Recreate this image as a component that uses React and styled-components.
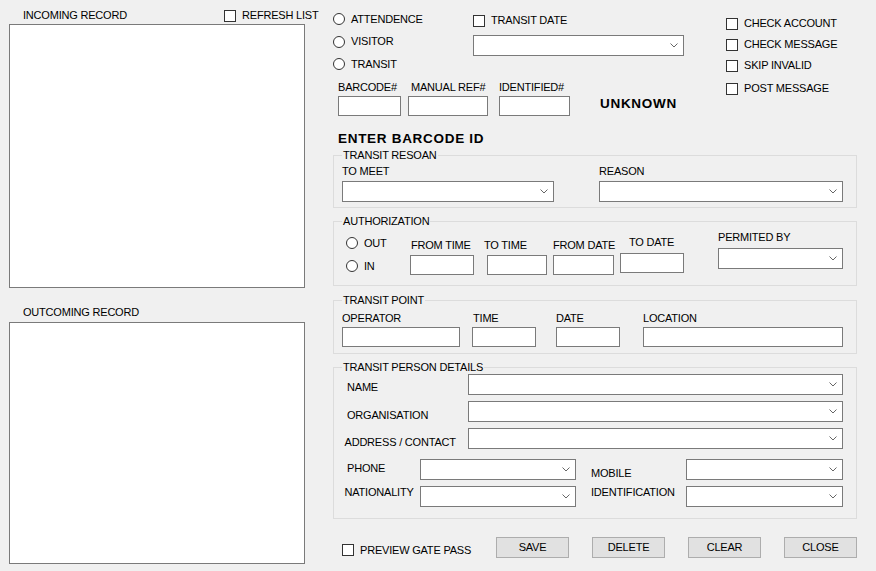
import React from "react";
import styled, { createGlobalStyle } from "styled-components";

const GlobalStyle = createGlobalStyle`
  html, body { margin: 0; padding: 0; background: #f0f0f0; }
  * { box-sizing: border-box; }
`;

const Window = styled.div`
  width: 876px;
  height: 571px;
  overflow: hidden;
  display: flex;
  background: #f0f0f0;
  color: #000;
  font-family: "Liberation Sans", Arial, sans-serif;
  font-size: 11px;
  letter-spacing: -0.2px;
`;

/* ---------- left pane ---------- */
const LeftPane = styled.div`
  flex: 0 0 333px;
  padding-left: 9px;
  display: flex;
  flex-direction: column;
`;

const ListHeader = styled.div`
  display: flex;
  align-items: center;
  padding-left: 14px;
  margin-top: ${(p) => p.$mt}px;
`;

const Label = styled.div`
  line-height: 13px;
  white-space: nowrap;
  flex: 0 0 auto;
  width: ${(p) => (p.$w ? `${p.$w}px` : "auto")};
  margin-top: ${(p) => p.$mt || 0}px;
  margin-left: ${(p) => p.$ml || 0}px;
  padding-left: ${(p) => p.$pl || 0}px;
`;

const ListBox = styled.div`
  width: 296px;
  height: ${(p) => p.$h}px;
  margin-top: ${(p) => p.$mt}px;
  background: #fff;
  border: 1px solid #7a7a7a;
`;

/* ---------- common controls ---------- */
const CheckItem = styled.div`
  display: flex;
  align-items: center;
  gap: 6px;
  height: 13px;
  line-height: 13px;
  white-space: nowrap;
  flex: 0 0 auto;
  width: ${(p) => (p.$w ? `${p.$w}px` : "auto")};
  margin-top: ${(p) => p.$mt || 0}px;
  margin-left: ${(p) => p.$ml || 0}px;
`;

const Box = styled.span`
  width: 12px;
  height: 12px;
  flex: 0 0 12px;
  border: 1px solid #333;
  background: #fff;
`;

const RadioItem = styled.div`
  display: flex;
  align-items: center;
  gap: 6px;
  height: 13px;
  line-height: 13px;
  white-space: nowrap;
`;

const Circle = styled.span`
  width: 12px;
  height: 12px;
  flex: 0 0 12px;
  border: 1px solid #333;
  border-radius: 50%;
  background: #fff;
`;

const TextBox = styled.div`
  width: ${(p) => p.$w}px;
  height: 20px;
  margin-left: ${(p) => p.$dx || 0}px;
  background: #fff;
  border: 1px solid #7a7a7a;
  flex: 0 0 auto;
`;

const ComboFrame = styled.div`
  width: ${(p) => p.$w}px;
  height: 21px;
  margin-left: ${(p) => p.$dx || 0}px;
  margin-top: ${(p) => p.$mt || 0}px;
  background: #fff;
  border: 1px solid #7a7a7a;
  flex: 0 0 auto;
  display: flex;
  align-items: center;
  justify-content: flex-end;
  padding-right: 5px;
`;

const Combo = ({ w, dx, mt }) => (
  <ComboFrame $w={w} $dx={dx} $mt={mt}>
    <svg width="8" height="5" viewBox="0 0 8 5">
      <polyline points="0.5,0.5 4,4 7.5,0.5" fill="none" stroke="#666" strokeWidth="1" />
    </svg>
  </ComboFrame>
);

const Field = styled.div`
  display: flex;
  flex-direction: column;
  flex: 0 0 auto;
  width: ${(p) => p.$w}px;
  margin-left: ${(p) => p.$ml || 0}px;
  margin-top: ${(p) => p.$mt || 0}px;
`;

const FieldLabel = styled.div`
  line-height: 13px;
  white-space: nowrap;
  padding-left: ${(p) => p.$dx || 0}px;
  margin-bottom: ${(p) => p.$gap}px;
`;

const BoldText = styled.div`
  font-size: 13.5px;
  font-weight: bold;
  letter-spacing: 0.7px;
  line-height: 16px;
  white-space: nowrap;
  margin-top: ${(p) => p.$mt || 0}px;
  margin-left: ${(p) => p.$ml || 0}px;
`;

/* ---------- right pane ---------- */
const RightPane = styled.div`
  flex: 1 1 auto;
  display: flex;
  flex-direction: column;
`;

const TopSection = styled.div`
  display: flex;
`;

const TopLeft = styled.div`
  flex: 0 0 393px;
  display: flex;
  flex-direction: column;
`;

const Row = styled.div`
  display: flex;
  align-items: flex-start;
  margin-top: ${(p) => p.$mt || 0}px;
`;

const PersonRow = styled.div`
  display: flex;
  align-items: flex-start;
  height: 21px;
  margin-top: ${(p) => p.$mt || 0}px;
`;

const RadioColumn = styled.div`
  flex: 0 0 ${(p) => p.$w}px;
  display: flex;
  flex-direction: column;
  gap: ${(p) => p.$gap}px;
  padding-top: ${(p) => p.$pt}px;
  margin-left: ${(p) => p.$ml || 0}px;
`;

const TransitDateColumn = styled.div`
  display: flex;
  flex-direction: column;
  padding-top: 14px;
`;

const CheckColumn = styled.div`
  display: flex;
  flex-direction: column;
  padding-top: 17px;
`;

const Group = styled.fieldset`
  width: 524px;
  min-width: 0;
  margin: ${(p) => p.$mt}px 0 0 0;
  padding: 0;
  border: 1px solid #dcdcdc;
`;

const Legend = styled.legend`
  margin-left: 8px;
  padding: 0 1px;
  line-height: 13px;
  font-size: 11px;
  white-space: nowrap;
`;

const GroupBody = styled.div`
  display: flex;
  flex-direction: ${(p) => p.$dir || "row"};
  align-items: flex-start;
  padding: ${(p) => p.$pad};
`;

const Footer = styled.div`
  display: flex;
  align-items: flex-start;
  margin-top: 18px;
`;

const ButtonBar = styled.div`
  display: flex;
  gap: 23px;
`;

const Button = styled.button`
  width: 73px;
  height: 21px;
  padding: 0;
  background: #e1e1e1;
  border: 1px solid #adadad;
  border-radius: 0;
  font-family: "Liberation Sans", Arial, sans-serif;
  font-size: 11px;
  letter-spacing: -0.2px;
  color: #000;
  line-height: 19px;
`;

const Check = ({ children, ...rest }) => (
  <CheckItem {...rest}>
    <Box />
    <span>{children}</span>
  </CheckItem>
);

const Radio = ({ children }) => (
  <RadioItem>
    <Circle />
    <span>{children}</span>
  </RadioItem>
);

const authFields = [
  { label: "FROM TIME", ml: 14, mt: 11, gap: 3, ldx: 1, bdx: 0, bw: 64 },
  { label: "TO TIME", ml: 9, mt: 11, gap: 3, ldx: 1, bdx: 4, bw: 60 },
  { label: "FROM DATE", ml: 6, mt: 11, gap: 3, ldx: 0, bdx: 0, bw: 61 },
  { label: "TO DATE", ml: 6, mt: 8, gap: 4, ldx: 9, bdx: 0, bw: 64 },
];

const pointFields = [
  { label: "OPERATOR", ml: 8, ldx: 0, bdx: 0, bw: 118 },
  { label: "TIME", ml: 12, ldx: 1, bdx: 0, bw: 64 },
  { label: "DATE", ml: 20, ldx: 0, bdx: 0, bw: 64 },
  { label: "LOCATION", ml: 23, ldx: 0, bdx: 0, bw: 200 },
];

export default function App() {
  return (
    <>
      <GlobalStyle />
      <Window>
        <LeftPane>
          <ListHeader $mt={9}>
            <Label $w={201}>INCOMING RECORD</Label>
            <Check>REFRESH LIST</Check>
          </ListHeader>
          <ListBox $mt={2} $h={264} />
          <Label $mt={18} $pl={14}>OUTCOMING RECORD</Label>
          <ListBox $mt={3} $h={242} />
        </LeftPane>

        <RightPane>
          <TopSection>
            <TopLeft>
              <Row>
                <RadioColumn $w={140} $gap={9.5} $pt={12.5}>
                  <Radio>ATTENDENCE</Radio>
                  <Radio>VISITOR</Radio>
                  <Radio>TRANSIT</Radio>
                </RadioColumn>
                <TransitDateColumn>
                  <Check>TRANSIT DATE</Check>
                  <Combo w={211} mt={8} />
                </TransitDateColumn>
              </Row>
              <Row $mt={10}>
                <Field $w={63} $ml={5}>
                  <FieldLabel $gap={2.5}>BARCODE#</FieldLabel>
                  <TextBox $w={63} />
                </Field>
                <Field $w={80} $ml={7}>
                  <FieldLabel $gap={2.5} $dx={3}>MANUAL REF#</FieldLabel>
                  <TextBox $w={80} />
                </Field>
                <Field $w={71} $ml={11}>
                  <FieldLabel $gap={2.5}>IDENTIFIED#</FieldLabel>
                  <TextBox $w={71} />
                </Field>
                <BoldText $ml={30} $mt={15.5}>UNKNOWN</BoldText>
              </Row>
              <BoldText $ml={5} $mt={14.5}>ENTER BARCODE ID</BoldText>
            </TopLeft>
            <CheckColumn>
              <Check>CHECK ACCOUNT</Check>
              <Check $mt={8}>CHECK MESSAGE</Check>
              <Check $mt={8}>SKIP INVALID</Check>
              <Check $mt={10}>POST MESSAGE</Check>
            </CheckColumn>
          </TopSection>

          <Group $mt={2.5}>
            <Legend>TRANSIT RESOAN</Legend>
            <GroupBody $pad="2.5px 0 5px 0">
              <Field $w={212} $ml={8}>
                <FieldLabel $gap={3}>TO MEET</FieldLabel>
                <Combo w={212} />
              </Field>
              <Field $w={244} $ml={45}>
                <FieldLabel $gap={3}>REASON</FieldLabel>
                <Combo w={244} />
              </Field>
            </GroupBody>
          </Group>

          <Group $mt={7.5}>
            <Legend>AUTHORIZATION</Legend>
            <GroupBody $pad="0 0 10px 0">
              <RadioColumn $w={50} $gap={10} $pt={8.5} $ml={12}>
                <Radio>OUT</Radio>
                <Radio>IN</Radio>
              </RadioColumn>
              {authFields.map((f) => (
                <Field key={f.label} $w={f.bdx + f.bw} $ml={f.ml} $mt={f.mt}>
                  <FieldLabel $gap={f.gap} $dx={f.ldx}>{f.label}</FieldLabel>
                  <TextBox $w={f.bw} $dx={f.bdx} />
                </Field>
              ))}
              <Field $w={125} $ml={34} $mt={3}>
                <FieldLabel $gap={4}>PERMITED BY</FieldLabel>
                <Combo w={125} />
              </Field>
            </GroupBody>
          </Group>

          <Group $mt={7.5}>
            <Legend>TRANSIT POINT</Legend>
            <GroupBody $pad="5px 0 6px 0">
              {pointFields.map((f) => (
                <Field key={f.label} $w={f.bdx + f.bw} $ml={f.ml}>
                  <FieldLabel $gap={2} $dx={f.ldx}>{f.label}</FieldLabel>
                  <TextBox $w={f.bw} $dx={f.bdx} />
                </Field>
              ))}
            </GroupBody>
          </Group>

          <Group $mt={7.5}>
            <Legend>TRANSIT PERSON DETAILS</Legend>
            <GroupBody $dir="column" $pad="0 0 10.5px 0">
              <PersonRow>
                <Label $w={134} $pl={13} $mt={7}>NAME</Label>
                <Combo w={375} />
              </PersonRow>
              <PersonRow $mt={6}>
                <Label $w={134} $pl={13} $mt={7.5}>ORGANISATION</Label>
                <Combo w={375} />
              </PersonRow>
              <PersonRow $mt={6}>
                <Label $w={134} $pl={10.5} $mt={7.5}>ADDRESS / CONTACT</Label>
                <Combo w={375} />
              </PersonRow>
              <PersonRow $mt={10}>
                <Label $w={86} $pl={13} $mt={2.5}>PHONE</Label>
                <Combo w={156} />
                <Label $w={110} $pl={15} $mt={7.5}>MOBILE</Label>
                <Combo w={157} />
              </PersonRow>
              <PersonRow $mt={6}>
                <Label $w={86} $pl={10.5} $mt={-0.5}>NATIONALITY</Label>
                <Combo w={156} />
                <Label $w={110} $pl={15} $mt={0}>IDENTIFICATION</Label>
                <Combo w={157} />
              </PersonRow>
            </GroupBody>
          </Group>

          <Footer>
            <Check $w={154} $ml={9} $mt={7}>PREVIEW GATE PASS</Check>
            <ButtonBar>
              <Button>SAVE</Button>
              <Button>DELETE</Button>
              <Button>CLEAR</Button>
              <Button>CLOSE</Button>
            </ButtonBar>
          </Footer>
        </RightPane>
      </Window>
    </>
  );
}
